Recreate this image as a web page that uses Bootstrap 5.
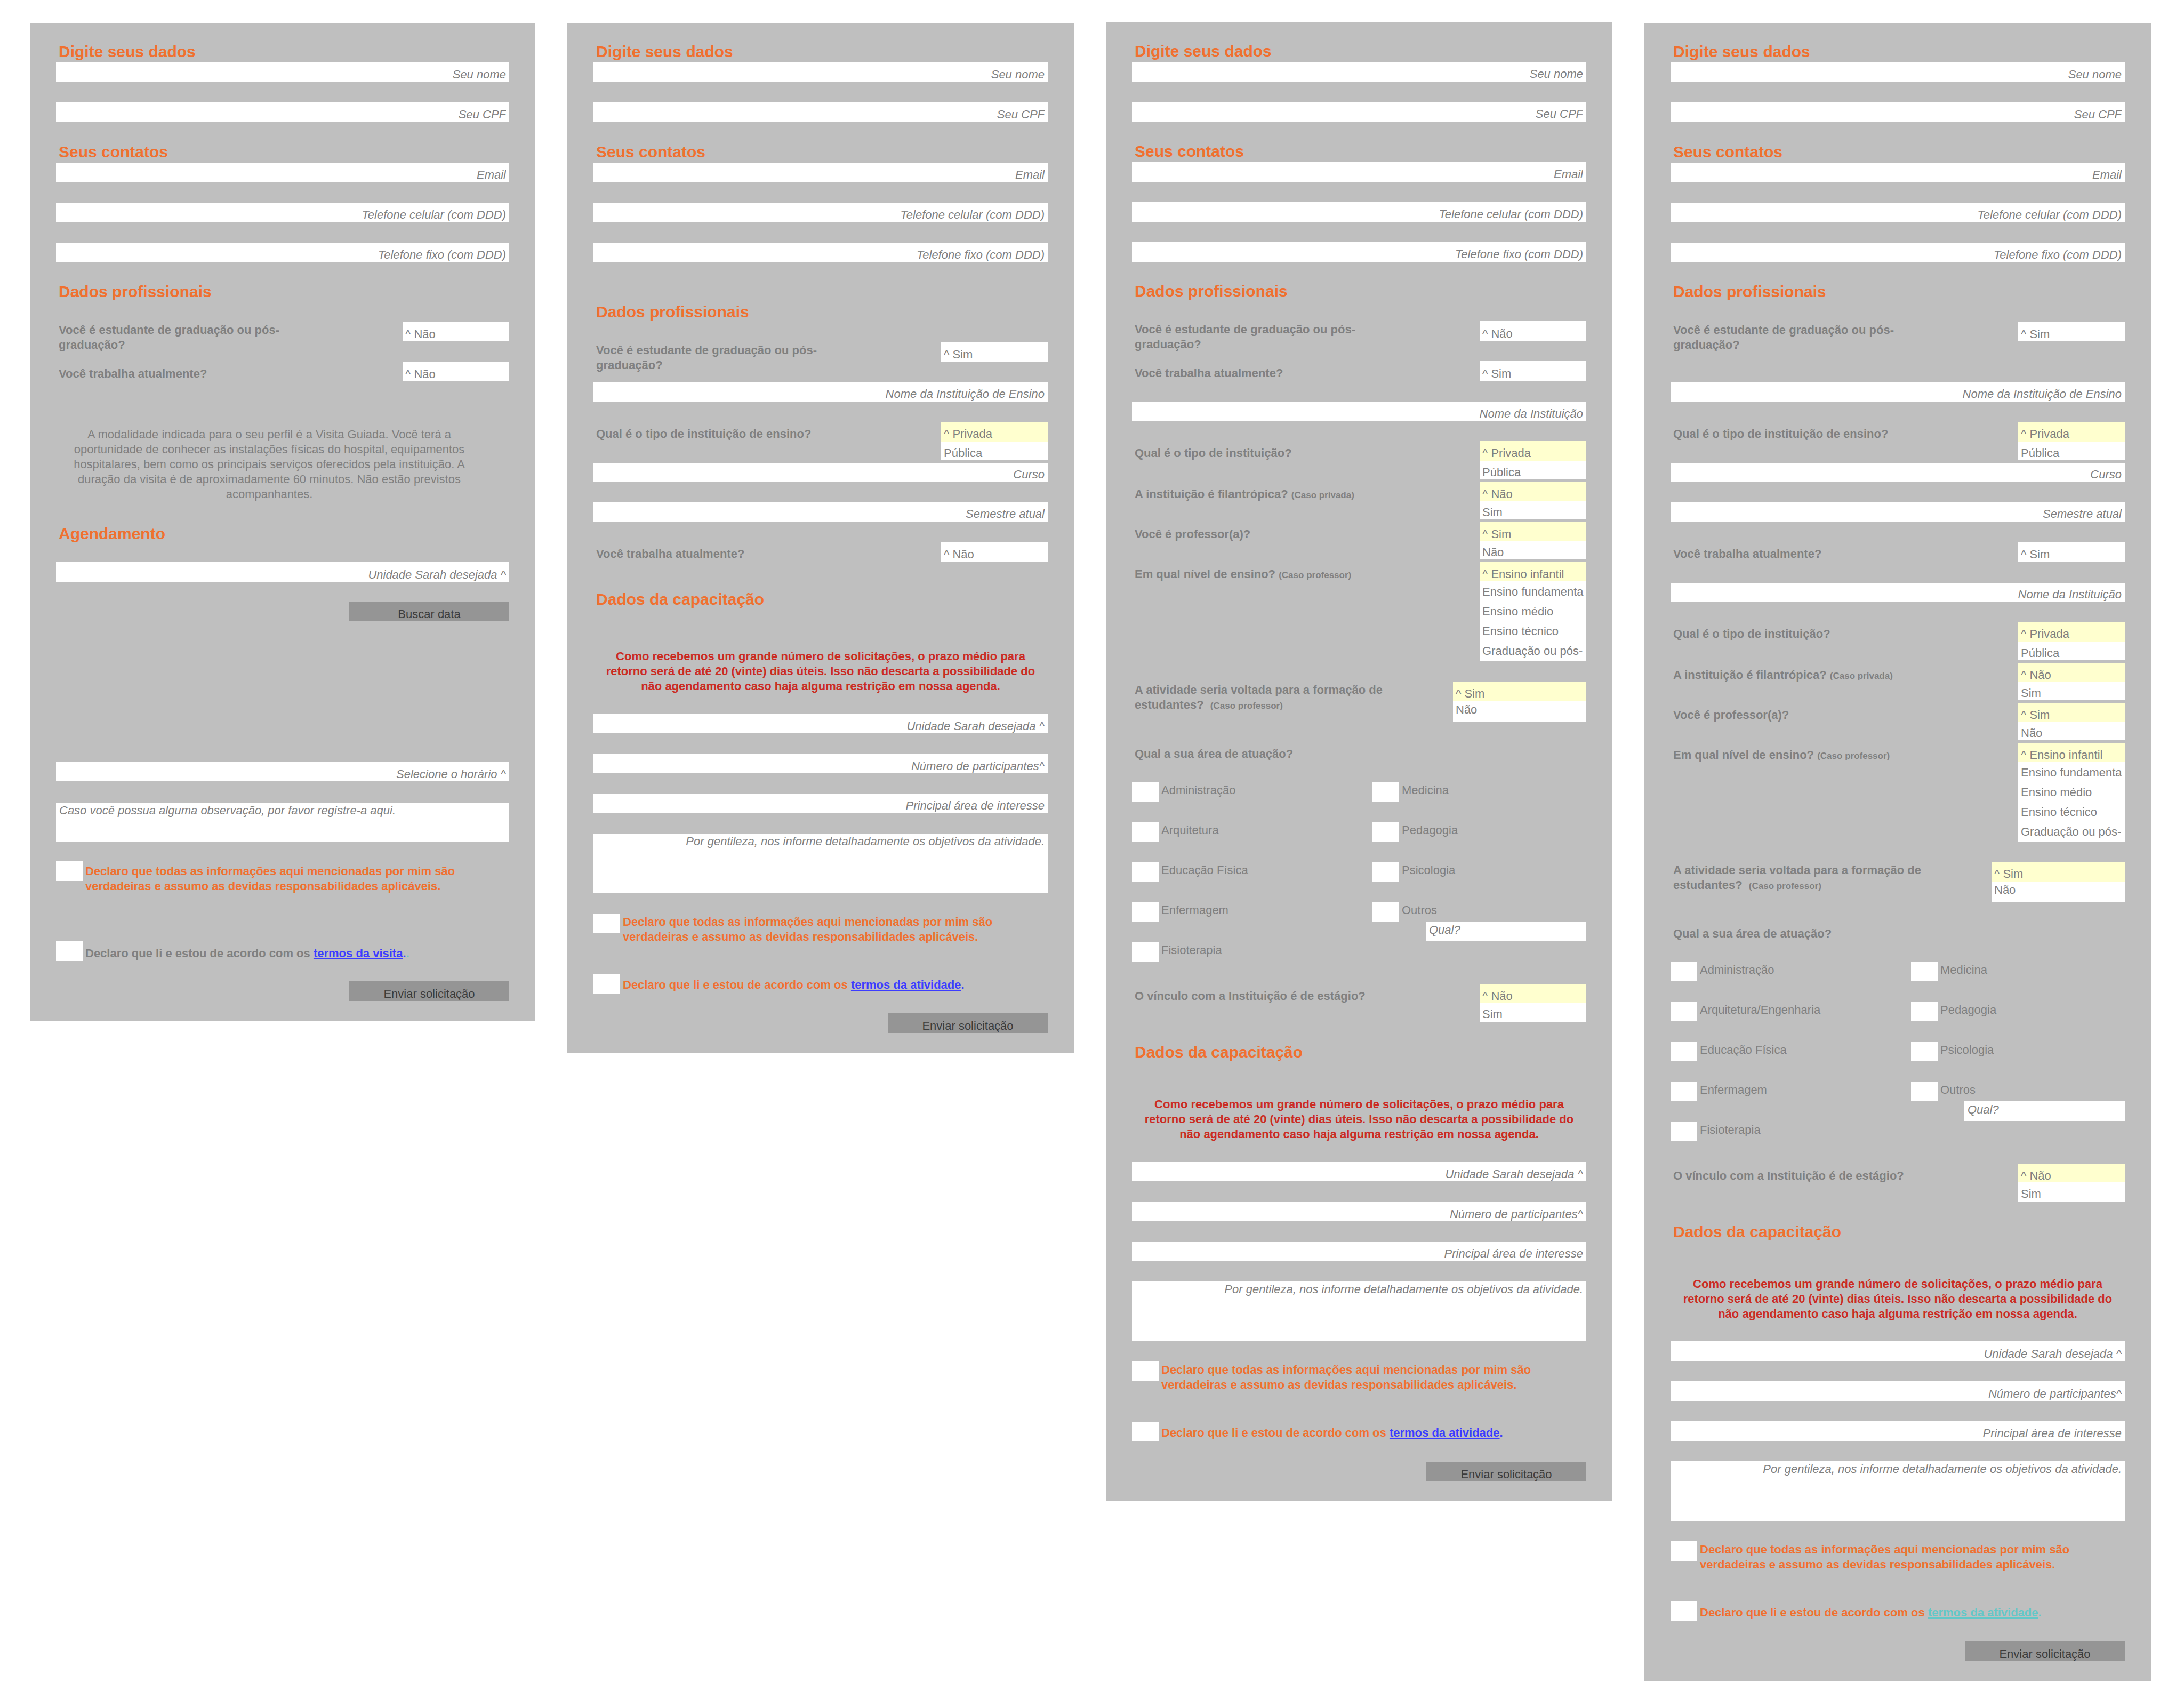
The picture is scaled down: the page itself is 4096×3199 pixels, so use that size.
<!DOCTYPE html>
<html lang="pt-BR">
<head>
<meta charset="utf-8">
<meta name="viewport" content="width=device-width, initial-scale=1">
<title>Formulários de visita e capacitação</title>
<link href="https://cdn.jsdelivr.net/npm/bootstrap@5.3.0/dist/css/bootstrap.min.css" rel="stylesheet">
<style>
  body { font-family: "Liberation Sans", Arial, sans-serif; font-size: 22px; line-height: 28px; color: #808080; background: #fff; }
  .board { display: grid; grid-template-columns: 948fr 950fr 950fr 950fr; column-gap: 60px; align-items: start; padding: 43px 62px 43px 56px; }
  .panel { background: #bfbfbf; padding: 36px 49px 37px; }
  .panel-raised { margin-top: -1px; }

  /* vertical rhythm */
  .gap-tight { margin-top: 5px; }
  .gap-after-pair { margin-top: 17px; }
  .gap-field { margin-top: 35px; }
  .gap-section { margin-top: 37px; }
  .gap-std { margin-top: 38px; }
  .gap-inst { margin-top: 40px; }
  .gap-group { margin-top: 42px; }
  .gap-chapter { margin-top: 53px; }
  .gap-wide { margin-top: 55px; }
  .gap-notice { margin-top: 66px; }
  .gap-double { margin-top: 75px; }
  .gap-text { margin-top: 86px; }
  .gap-visit { margin-top: 89px; }
  .gap-calendar { margin-top: 263px; }

  .form-title { font-size: 30px; line-height: 36px; font-weight: 700; color: #f0702f; padding-left: 5px; margin-bottom: 2px; }

  .form-control.field, .form-control.choice, .form-control.picklist, .form-control.memo {
    display: block; border: 0; border-radius: 0; background: #fff; color: #808080;
    font-size: 22px; box-shadow: none; min-height: 0;
  }
  .form-control.field { height: 37px; padding: 9px 6px 1px; line-height: 27px; font-style: italic; text-align: right; text-align-last: right; }
  select.form-control.field { padding: 10px 6px 0; }
  .form-control.field.short { height: 35px; line-height: 25px; }
  .form-control.field.left { padding: 1px 6px 6px; line-height: 30px; text-align: left; text-align-last: left; }
  .form-control::placeholder { color: #808080; opacity: 1; }
  select.form-control { appearance: none; }
  .form-control.choice { width: 200px; flex: none; height: 37px; padding: 10px 5px 0; line-height: 27px; }
  .form-control.memo { height: 112px; padding: 1px 6px; line-height: 28px; font-style: italic; text-align: right; resize: none; overflow: hidden; }
  .form-control.memo.note { height: 73px; text-align: left; }

  /* open lists */
  .form-control.picklist { width: 200px; flex: none; height: 70px; padding: 0; overflow: hidden; }
  .picklist option { height: 35px; padding: 9px 5px 0; line-height: 26px; color: #808080; background: #fff; }
  .picklist option:checked { color: #808080; background: #ffffcf; padding-top: 10px; line-height: 25px; }
  .form-control.picklist.first-tall, .form-control.picklist.last-tall { height: 72px; }
  .picklist.first-tall option:first-child, .picklist.last-tall option:last-child { height: 37px; }
  .form-control.picklist.levels { height: 186px; }
  .picklist.levels option + option { height: 37px; padding-top: 8px; }
  .form-control.picklist.activity { width: 250px; height: 75px; }
  .picklist.activity option { height: 37px; }
  .picklist.activity option + option { padding-top: 3px; }

  .ask { font-weight: 700; padding: 9px 0 0 5px; line-height: 28px; }
  .ask.pair { padding-top: 2px; }
  .hint { font-size: 17px; }
  .info-text { width: 800px; max-width: 100%; text-align: center; margin-bottom: 0; }
  .warning-text { font-weight: 700; color: #cb2b23; text-align: center; margin-bottom: 0; }

  .form-check-input.box { width: 50px; height: 37px; margin: 0; border: 0; border-radius: 0; background-color: #fff; flex: none; float: none; }
  .box-label { padding: 2px 0 0 5px; }
  .agree { font-weight: 700; color: #f0702f; }
  .agree .single { padding-top: 7px; }
  .agree.visit .box-label { padding-top: 5px; }
  .agree.visit .single { padding-top: 9px; color: #808080; }
  .terms { color: #3c3cff; }
  .terms.fresh { color: #62c8c8; }
  .areas { display: grid; grid-template-columns: 451fr 401fr; grid-auto-rows: 37px; row-gap: 38px; }
  .other { position: relative; }
  .other .form-control.field { position: absolute; left: 100px; right: 0; top: 37px; width: auto; }
  .btn.action { display: block; width: 300px; height: 37px; margin-left: auto; padding: 10px 0 0; border: 0; border-radius: 0; background: #959595; color: #3c3c3c; font-size: 22px; line-height: 27px; }
</style>
</head>
<body>
<main class="board">

  <!-- Visita guiada -->
  <form class="panel">
    <h2 class="form-title">Digite seus dados</h2>
    <input class="form-control field" type="text" placeholder="Seu nome" aria-label="Seu nome">
    <input class="form-control field gap-std" type="text" placeholder="Seu CPF" aria-label="Seu CPF">
    <h2 class="form-title gap-std">Seus contatos</h2>
    <input class="form-control field" type="email" placeholder="Email" aria-label="Email">
    <input class="form-control field gap-std" type="tel" placeholder="Telefone celular (com DDD)" aria-label="Telefone celular">
    <input class="form-control field gap-std" type="tel" placeholder="Telefone fixo (com DDD)" aria-label="Telefone fixo">
    <h2 class="form-title gap-section">Dados profissionais</h2>
    <div class="d-flex justify-content-between align-items-start gap-std">
      <label class="ask pair" for="a-est">Você é estudante de graduação ou pós-<br>graduação?</label>
      <select class="form-control choice" id="a-est"><option>^ Não</option><option>Sim</option></select>
    </div>
    <div class="d-flex justify-content-between align-items-start gap-after-pair">
      <label class="ask" for="a-trab">Você trabalha atualmente?</label>
      <select class="form-control choice" id="a-trab"><option>^ Não</option><option>Sim</option></select>
    </div>
    <p class="info-text gap-text">A modalidade indicada para o seu perfil é a Visita Guiada. Você terá a<br>oportunidade de conhecer as instalações físicas do hospital, equipamentos<br>hospitalares, bem como os principais serviços oferecidos pela instituição. A<br>duração da visita é de aproximadamente 60 minutos. Não estão previstos<br>acompanhantes.</p>
    <h2 class="form-title gap-group">Agendamento</h2>
    <select class="form-control field gap-field" aria-label="Unidade Sarah desejada"><option>Unidade Sarah desejada ^</option></select>
    <button class="btn action gap-section" type="button">Buscar data</button>
    <select class="form-control field gap-calendar" aria-label="Selecione o horário"><option>Selecione o horário ^</option></select>
    <textarea class="form-control memo note gap-inst" placeholder="Caso você possua alguma observação, por favor registre-a aqui." aria-label="Observação"></textarea>
    <div class="agree visit d-flex align-items-start gap-section">
      <input class="form-check-input box" type="checkbox" id="a-decl">
      <label class="box-label" for="a-decl">Declaro que todas as informações aqui mencionadas por mim são<br>verdadeiras e assumo as devidas responsabilidades aplicáveis.</label>
    </div>
    <div class="agree visit d-flex align-items-start gap-visit">
      <input class="form-check-input box" type="checkbox" id="a-termos">
      <label class="box-label single" for="a-termos">Declaro que li e estou de acordo com os <a class="terms" href="#">termos da visita</a><span class="terms">.</span><span class="terms fresh">.</span></label>
    </div>
    <button class="btn action gap-std" type="submit">Enviar solicitação</button>
  </form>

  <!-- Estudante -->
  <form class="panel">
    <h2 class="form-title">Digite seus dados</h2>
    <input class="form-control field" type="text" placeholder="Seu nome" aria-label="Seu nome">
    <input class="form-control field gap-std" type="text" placeholder="Seu CPF" aria-label="Seu CPF">
    <h2 class="form-title gap-std">Seus contatos</h2>
    <input class="form-control field" type="email" placeholder="Email" aria-label="Email">
    <input class="form-control field gap-std" type="tel" placeholder="Telefone celular (com DDD)" aria-label="Telefone celular">
    <input class="form-control field gap-std" type="tel" placeholder="Telefone fixo (com DDD)" aria-label="Telefone fixo">
    <h2 class="form-title gap-double">Dados profissionais</h2>
    <div class="d-flex justify-content-between align-items-start gap-std">
      <label class="ask pair" for="b-est">Você é estudante de graduação ou pós-<br>graduação?</label>
      <select class="form-control choice" id="b-est"><option>^ Sim</option><option>Não</option></select>
    </div>
    <input class="form-control field gap-after-pair" type="text" placeholder="Nome da Instituição de Ensino" aria-label="Nome da Instituição de Ensino">
    <div class="d-flex justify-content-between align-items-start gap-std">
      <label class="ask" for="b-tipo">Qual é o tipo de instituição de ensino?</label>
      <select class="form-control picklist first-tall" size="2" id="b-tipo"><option selected>^ Privada</option><option>Pública</option></select>
    </div>
    <input class="form-control field short gap-tight" type="text" placeholder="Curso" aria-label="Curso">
    <input class="form-control field gap-std" type="text" placeholder="Semestre atual" aria-label="Semestre atual">
    <div class="d-flex justify-content-between align-items-start gap-std">
      <label class="ask" for="b-trab">Você trabalha atualmente?</label>
      <select class="form-control choice" id="b-trab"><option>^ Não</option><option>Sim</option></select>
    </div>
    <h2 class="form-title gap-chapter">Dados da capacitação</h2>
    <p class="warning-text gap-double">Como recebemos um grande número de solicitações, o prazo médio para<br>retorno será de até 20 (vinte) dias úteis. Isso não descarta a possibilidade do<br>não agendamento caso haja alguma restrição em nossa agenda.</p>
    <select class="form-control field gap-section" aria-label="Unidade Sarah desejada"><option>Unidade Sarah desejada ^</option></select>
    <select class="form-control field gap-std" aria-label="Número de participantes"><option>Número de participantes^</option></select>
    <input class="form-control field gap-std" type="text" placeholder="Principal área de interesse" aria-label="Principal área de interesse">
    <textarea class="form-control memo gap-std" placeholder="Por gentileza, nos informe detalhadamente os objetivos da atividade." aria-label="Objetivos da atividade"></textarea>
    <div class="agree d-flex align-items-start gap-std">
      <input class="form-check-input box" type="checkbox" id="b-decl">
      <label class="box-label" for="b-decl">Declaro que todas as informações aqui mencionadas por mim são<br>verdadeiras e assumo as devidas responsabilidades aplicáveis.</label>
    </div>
    <div class="agree d-flex align-items-start gap-wide">
      <input class="form-check-input box" type="checkbox" id="b-termos">
      <label class="box-label single" for="b-termos">Declaro que li e estou de acordo com os <a class="terms" href="#">termos da atividade</a><span class="terms">.</span></label>
    </div>
    <button class="btn action gap-section" type="submit">Enviar solicitação</button>
  </form>

  <!-- Profissional -->
  <form class="panel panel-raised">
    <h2 class="form-title">Digite seus dados</h2>
    <input class="form-control field" type="text" placeholder="Seu nome" aria-label="Seu nome">
    <input class="form-control field gap-std" type="text" placeholder="Seu CPF" aria-label="Seu CPF">
    <h2 class="form-title gap-std">Seus contatos</h2>
    <input class="form-control field" type="email" placeholder="Email" aria-label="Email">
    <input class="form-control field gap-std" type="tel" placeholder="Telefone celular (com DDD)" aria-label="Telefone celular">
    <input class="form-control field gap-std" type="tel" placeholder="Telefone fixo (com DDD)" aria-label="Telefone fixo">
    <h2 class="form-title gap-section">Dados profissionais</h2>
    <div class="d-flex justify-content-between align-items-start gap-std">
      <label class="ask pair" for="c-est">Você é estudante de graduação ou pós-<br>graduação?</label>
      <select class="form-control choice" id="c-est"><option>^ Não</option><option>Sim</option></select>
    </div>
    <div class="d-flex justify-content-between align-items-start gap-after-pair">
      <label class="ask" for="c-trab">Você trabalha atualmente?</label>
      <select class="form-control choice" id="c-trab"><option>^ Sim</option><option>Não</option></select>
    </div>
    <input class="form-control field short gap-inst" type="text" placeholder="Nome da Instituição" aria-label="Nome da Instituição">
    <div class="d-flex justify-content-between align-items-start gap-std">
      <label class="ask" for="c-tipo">Qual é o tipo de instituição?</label>
      <select class="form-control picklist first-tall" size="2" id="c-tipo"><option selected>^ Privada</option><option>Pública</option></select>
    </div>
    <div class="d-flex justify-content-between align-items-start gap-tight">
      <label class="ask" for="c-fil">A instituição é filantrópica? <span class="hint">(Caso privada)</span></label>
      <select class="form-control picklist" size="2" id="c-fil"><option selected>^ Não</option><option>Sim</option></select>
    </div>
    <div class="d-flex justify-content-between align-items-start gap-tight">
      <label class="ask" for="c-prof">Você é professor(a)?</label>
      <select class="form-control picklist" size="2" id="c-prof"><option selected>^ Sim</option><option>Não</option></select>
    </div>
    <div class="d-flex justify-content-between align-items-start gap-tight">
      <label class="ask" for="c-nivel">Em qual nível de ensino? <span class="hint">(Caso professor)</span></label>
      <select class="form-control picklist levels" size="5" id="c-nivel"><option selected>^ Ensino infantil</option><option>Ensino fundamenta</option><option>Ensino médio</option><option>Ensino técnico</option><option>Graduação ou pós-</option></select>
    </div>
    <div class="d-flex justify-content-between align-items-start gap-std">
      <label class="ask pair" for="c-form">A atividade seria voltada para a formação de<br>estudantes?&nbsp; <span class="hint">(Caso professor)</span></label>
      <select class="form-control picklist activity" size="2" id="c-form"><option selected>^ Sim</option><option>Não</option></select>
    </div>
    <div class="ask gap-std" id="c-area">Qual a sua área de atuação?</div>
    <div class="areas gap-std" role="group" aria-labelledby="c-area">
      <div class="d-flex"><input class="form-check-input box" type="checkbox" id="c-adm"><label class="box-label" for="c-adm">Administração</label></div>
      <div class="d-flex"><input class="form-check-input box" type="checkbox" id="c-med"><label class="box-label" for="c-med">Medicina</label></div>
      <div class="d-flex"><input class="form-check-input box" type="checkbox" id="c-arq"><label class="box-label" for="c-arq">Arquitetura</label></div>
      <div class="d-flex"><input class="form-check-input box" type="checkbox" id="c-ped"><label class="box-label" for="c-ped">Pedagogia</label></div>
      <div class="d-flex"><input class="form-check-input box" type="checkbox" id="c-edf"><label class="box-label" for="c-edf">Educação Física</label></div>
      <div class="d-flex"><input class="form-check-input box" type="checkbox" id="c-psi"><label class="box-label" for="c-psi">Psicologia</label></div>
      <div class="d-flex"><input class="form-check-input box" type="checkbox" id="c-enf"><label class="box-label" for="c-enf">Enfermagem</label></div>
      <div class="d-flex other"><input class="form-check-input box" type="checkbox" id="c-out"><label class="box-label" for="c-out">Outros</label><input class="form-control field left" type="text" placeholder="Qual?" aria-label="Qual?"></div>
      <div class="d-flex"><input class="form-check-input box" type="checkbox" id="c-fis"><label class="box-label" for="c-fis">Fisioterapia</label></div>
    </div>
    <div class="d-flex justify-content-between align-items-start gap-group">
      <label class="ask" for="c-vin">O vínculo com a Instituição é de estágio?</label>
      <select class="form-control picklist last-tall" size="2" id="c-vin"><option selected>^ Não</option><option>Sim</option></select>
    </div>
    <h2 class="form-title gap-std">Dados da capacitação</h2>
    <p class="warning-text gap-notice">Como recebemos um grande número de solicitações, o prazo médio para<br>retorno será de até 20 (vinte) dias úteis. Isso não descarta a possibilidade do<br>não agendamento caso haja alguma restrição em nossa agenda.</p>
    <select class="form-control field gap-section" aria-label="Unidade Sarah desejada"><option>Unidade Sarah desejada ^</option></select>
    <select class="form-control field gap-std" aria-label="Número de participantes"><option>Número de participantes^</option></select>
    <input class="form-control field gap-std" type="text" placeholder="Principal área de interesse" aria-label="Principal área de interesse">
    <textarea class="form-control memo gap-std" placeholder="Por gentileza, nos informe detalhadamente os objetivos da atividade." aria-label="Objetivos da atividade"></textarea>
    <div class="agree d-flex align-items-start gap-std">
      <input class="form-check-input box" type="checkbox" id="c-decl">
      <label class="box-label" for="c-decl">Declaro que todas as informações aqui mencionadas por mim são<br>verdadeiras e assumo as devidas responsabilidades aplicáveis.</label>
    </div>
    <div class="agree d-flex align-items-start gap-wide">
      <input class="form-check-input box" type="checkbox" id="c-termos">
      <label class="box-label single" for="c-termos">Declaro que li e estou de acordo com os <a class="terms" href="#">termos da atividade</a><span class="terms">.</span></label>
    </div>
    <button class="btn action gap-std" type="submit">Enviar solicitação</button>
  </form>

  <!-- Estudante e profissional -->
  <form class="panel">
    <h2 class="form-title">Digite seus dados</h2>
    <input class="form-control field" type="text" placeholder="Seu nome" aria-label="Seu nome">
    <input class="form-control field gap-std" type="text" placeholder="Seu CPF" aria-label="Seu CPF">
    <h2 class="form-title gap-std">Seus contatos</h2>
    <input class="form-control field" type="email" placeholder="Email" aria-label="Email">
    <input class="form-control field gap-std" type="tel" placeholder="Telefone celular (com DDD)" aria-label="Telefone celular">
    <input class="form-control field gap-std" type="tel" placeholder="Telefone fixo (com DDD)" aria-label="Telefone fixo">
    <h2 class="form-title gap-section">Dados profissionais</h2>
    <div class="d-flex justify-content-between align-items-start gap-std">
      <label class="ask pair" for="d-est">Você é estudante de graduação ou pós-<br>graduação?</label>
      <select class="form-control choice" id="d-est"><option>^ Sim</option><option>Não</option></select>
    </div>
    <input class="form-control field gap-wide" type="text" placeholder="Nome da Instituição de Ensino" aria-label="Nome da Instituição de Ensino">
    <div class="d-flex justify-content-between align-items-start gap-std">
      <label class="ask" for="d-ens">Qual é o tipo de instituição de ensino?</label>
      <select class="form-control picklist first-tall" size="2" id="d-ens"><option selected>^ Privada</option><option>Pública</option></select>
    </div>
    <input class="form-control field short gap-tight" type="text" placeholder="Curso" aria-label="Curso">
    <input class="form-control field gap-std" type="text" placeholder="Semestre atual" aria-label="Semestre atual">
    <div class="d-flex justify-content-between align-items-start gap-std">
      <label class="ask" for="d-trab">Você trabalha atualmente?</label>
      <select class="form-control choice" id="d-trab"><option>^ Sim</option><option>Não</option></select>
    </div>
    <input class="form-control field short gap-inst" type="text" placeholder="Nome da Instituição" aria-label="Nome da Instituição">
    <div class="d-flex justify-content-between align-items-start gap-std">
      <label class="ask" for="d-tipo">Qual é o tipo de instituição?</label>
      <select class="form-control picklist first-tall" size="2" id="d-tipo"><option selected>^ Privada</option><option>Pública</option></select>
    </div>
    <div class="d-flex justify-content-between align-items-start gap-tight">
      <label class="ask" for="d-fil">A instituição é filantrópica? <span class="hint">(Caso privada)</span></label>
      <select class="form-control picklist" size="2" id="d-fil"><option selected>^ Não</option><option>Sim</option></select>
    </div>
    <div class="d-flex justify-content-between align-items-start gap-tight">
      <label class="ask" for="d-prof">Você é professor(a)?</label>
      <select class="form-control picklist" size="2" id="d-prof"><option selected>^ Sim</option><option>Não</option></select>
    </div>
    <div class="d-flex justify-content-between align-items-start gap-tight">
      <label class="ask" for="d-nivel">Em qual nível de ensino? <span class="hint">(Caso professor)</span></label>
      <select class="form-control picklist levels" size="5" id="d-nivel"><option selected>^ Ensino infantil</option><option>Ensino fundamenta</option><option>Ensino médio</option><option>Ensino técnico</option><option>Graduação ou pós-</option></select>
    </div>
    <div class="d-flex justify-content-between align-items-start gap-section">
      <label class="ask pair" for="d-form">A atividade seria voltada para a formação de<br>estudantes?&nbsp; <span class="hint">(Caso professor)</span></label>
      <select class="form-control picklist activity" size="2" id="d-form"><option selected>^ Sim</option><option>Não</option></select>
    </div>
    <div class="ask gap-section" id="d-area">Qual a sua área de atuação?</div>
    <div class="areas gap-std" role="group" aria-labelledby="d-area">
      <div class="d-flex"><input class="form-check-input box" type="checkbox" id="d-adm"><label class="box-label" for="d-adm">Administração</label></div>
      <div class="d-flex"><input class="form-check-input box" type="checkbox" id="d-med"><label class="box-label" for="d-med">Medicina</label></div>
      <div class="d-flex"><input class="form-check-input box" type="checkbox" id="d-arq"><label class="box-label" for="d-arq">Arquitetura/Engenharia</label></div>
      <div class="d-flex"><input class="form-check-input box" type="checkbox" id="d-ped"><label class="box-label" for="d-ped">Pedagogia</label></div>
      <div class="d-flex"><input class="form-check-input box" type="checkbox" id="d-edf"><label class="box-label" for="d-edf">Educação Física</label></div>
      <div class="d-flex"><input class="form-check-input box" type="checkbox" id="d-psi"><label class="box-label" for="d-psi">Psicologia</label></div>
      <div class="d-flex"><input class="form-check-input box" type="checkbox" id="d-enf"><label class="box-label" for="d-enf">Enfermagem</label></div>
      <div class="d-flex other"><input class="form-check-input box" type="checkbox" id="d-out"><label class="box-label" for="d-out">Outros</label><input class="form-control field left" type="text" placeholder="Qual?" aria-label="Qual?"></div>
      <div class="d-flex"><input class="form-check-input box" type="checkbox" id="d-fis"><label class="box-label" for="d-fis">Fisioterapia</label></div>
    </div>
    <div class="d-flex justify-content-between align-items-start gap-group">
      <label class="ask" for="d-vin">O vínculo com a Instituição é de estágio?</label>
      <select class="form-control picklist last-tall" size="2" id="d-vin"><option selected>^ Não</option><option>Sim</option></select>
    </div>
    <h2 class="form-title gap-std">Dados da capacitação</h2>
    <p class="warning-text gap-notice">Como recebemos um grande número de solicitações, o prazo médio para<br>retorno será de até 20 (vinte) dias úteis. Isso não descarta a possibilidade do<br>não agendamento caso haja alguma restrição em nossa agenda.</p>
    <select class="form-control field gap-section" aria-label="Unidade Sarah desejada"><option>Unidade Sarah desejada ^</option></select>
    <select class="form-control field gap-std" aria-label="Número de participantes"><option>Número de participantes^</option></select>
    <input class="form-control field gap-std" type="text" placeholder="Principal área de interesse" aria-label="Principal área de interesse">
    <textarea class="form-control memo gap-std" placeholder="Por gentileza, nos informe detalhadamente os objetivos da atividade." aria-label="Objetivos da atividade"></textarea>
    <div class="agree d-flex align-items-start gap-std">
      <input class="form-check-input box" type="checkbox" id="d-decl">
      <label class="box-label" for="d-decl">Declaro que todas as informações aqui mencionadas por mim são<br>verdadeiras e assumo as devidas responsabilidades aplicáveis.</label>
    </div>
    <div class="agree d-flex align-items-start gap-wide">
      <input class="form-check-input box" type="checkbox" id="d-termos">
      <label class="box-label single" for="d-termos">Declaro que li e estou de acordo com os <a class="terms fresh" href="#">termos da atividade</a><span class="terms fresh">.</span></label>
    </div>
    <button class="btn action gap-std" type="submit">Enviar solicitação</button>
  </form>

</main>
<script src="https://cdn.jsdelivr.net/npm/bootstrap@5.3.0/dist/js/bootstrap.bundle.min.js"></script>
</body>
</html>
